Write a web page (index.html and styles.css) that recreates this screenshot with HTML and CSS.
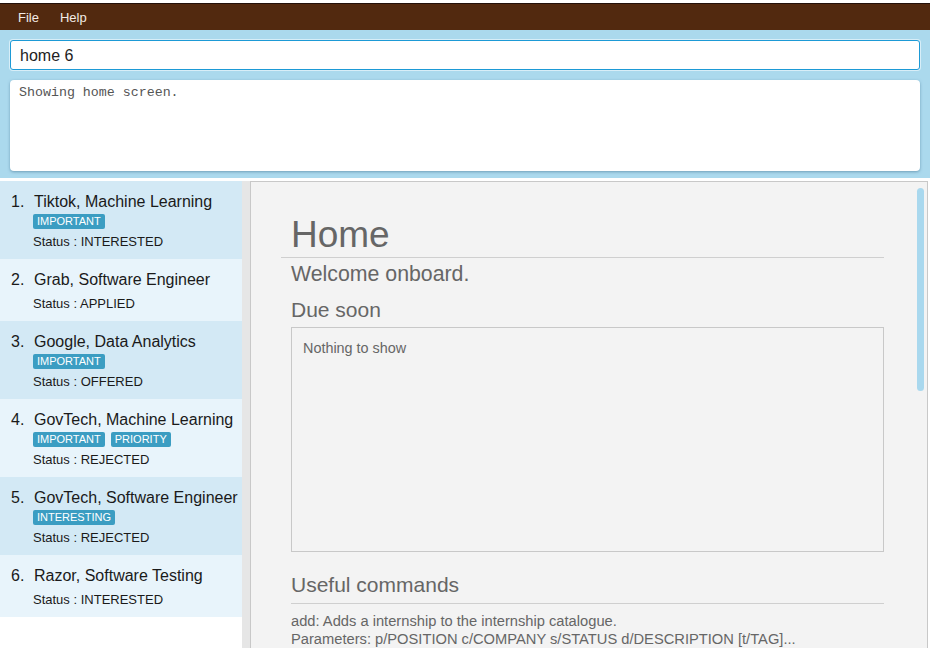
FILE: index.html
```html
<!DOCTYPE html>
<html>
<head>
<meta charset="utf-8">
<link rel="stylesheet" href="styles.css">
</head>
<body>
<div class="app">
  <div class="menubar">
    <span class="menu-item">File</span>
    <span class="menu-item">Help</span>
  </div>
  <div class="top">
    <div class="command">home 6</div>
    <div class="result">Showing home screen.</div>
  </div>
  <div class="bottom">
    <div class="list">
      <div class="cell dark tall">
        <div class="title"><span class="idx">1.</span>Tiktok, Machine Learning</div>
        <div class="tags"><span class="tag">IMPORTANT</span></div>
        <div class="status">Status : INTERESTED</div>
      </div>
      <div class="cell light">
        <div class="title"><span class="idx">2.</span>Grab, Software Engineer</div>
        <div class="status">Status : APPLIED</div>
      </div>
      <div class="cell dark tall">
        <div class="title"><span class="idx">3.</span>Google, Data Analytics</div>
        <div class="tags"><span class="tag">IMPORTANT</span></div>
        <div class="status">Status : OFFERED</div>
      </div>
      <div class="cell light tall">
        <div class="title"><span class="idx">4.</span>GovTech, Machine Learning</div>
        <div class="tags"><span class="tag">IMPORTANT</span><span class="tag">PRIORITY</span></div>
        <div class="status">Status : REJECTED</div>
      </div>
      <div class="cell dark tall">
        <div class="title"><span class="idx">5.</span>GovTech, Software Engineer</div>
        <div class="tags"><span class="tag">INTERESTING</span></div>
        <div class="status">Status : REJECTED</div>
      </div>
      <div class="cell light">
        <div class="title"><span class="idx">6.</span>Razor, Software Testing</div>
        <div class="status">Status : INTERESTED</div>
      </div>
    </div>
    <div class="gutter"></div>
    <div class="main">
      <div class="content">
        <h1 class="heading">Home</h1>
        <div class="welcome">Welcome onboard.</div>
        <div class="section due">Due soon</div>
        <div class="due-box">Nothing to show</div>
        <div class="section useful">Useful commands</div>
        <div class="cmd-text">add: Adds a internship to the internship catalogue.<br>Parameters: p/POSITION c/COMPANY s/STATUS d/DESCRIPTION [t/TAG]...</div>
      </div>
      <div class="scroll-thumb"></div>
    </div>
  </div>
</div>
</body>
</html>
```

FILE: styles.css
```css
* { box-sizing: border-box; }
html, body {
  margin: 0;
  padding: 0;
  width: 930px;
  height: 648px;
  overflow: hidden;
  background: #ffffff;
  font-family: "Liberation Sans", Arial, sans-serif;
}
.app {
  display: flex;
  flex-direction: column;
  height: 648px;
}
.menubar {
  margin-top: 3px;
  height: 27px;
  background: #52290f;
  border-top: 1px solid #24110a;
  display: flex;
  align-items: center;
  padding-left: 18px;
  gap: 21px;
}
.menu-item {
  color: #f3ebe6;
  font-size: 13px;
}
.top {
  background: #abd9ed;
  padding: 10px 10px 0 10px;
  height: 151px;
  border-bottom: 3px solid #ffffff;
}
.command {
  height: 30px;
  width: 910px;
  background: #ffffff;
  border: 1.5px solid #1d9ad6;
  border-radius: 3px;
  box-shadow: 0 0 0 1px #d8eef8;
  font-size: 16px;
  color: #222;
  padding-left: 9px;
  line-height: 29px;
}
.result {
  margin-top: 10px;
  height: 91px;
  width: 910px;
  background: #ffffff;
  border-radius: 4px;
  box-shadow: 0 1px 3px rgba(60, 110, 140, 0.55);
  font-family: "Liberation Mono", "Courier New", monospace;
  font-size: 13.3px;
  color: #555;
  padding: 5px 9px;
}
.bottom {
  flex: 1;
  display: flex;
  min-height: 0;
}
.list {
  width: 242px;
  background: #ffffff;
}
.cell {
  padding: 11px 0 0 11px;
  height: 62px;
}
.cell.tall { height: 78px; }
.cell.dark { background: #d3e9f5; }
.cell.light { background: #e8f4fb; }
.title {
  font-size: 16px;
  color: #1a1a1a;
  height: 20px;
  line-height: 20px;
  white-space: nowrap;
}
.idx {
  display: inline-block;
  width: 23px;
}
.tags {
  display: flex;
  gap: 6px;
  margin-left: 22px;
  margin-top: 2px;
  height: 15px;
}
.tag {
  background: #3b9dc2;
  color: #ffffff;
  font-size: 11px;
  line-height: 15px;
  height: 15px;
  padding: 0 4px;
  border-radius: 2px;
}
.status {
  margin-left: 22px;
  margin-top: 5px;
  font-size: 13px;
  color: #1a1a1a;
  line-height: 16px;
}
.cell:not(.tall) .status { margin-top: 6px; }
.gutter {
  width: 9px;
  background: #e6e6e6;
  border-right: 1px solid #c8c8c8;
}
.main {
  width: 677px;
  background: #f3f3f3;
  border-top: 1px solid #c8c8c8;
  border-right: 1px solid #c8c8c8;
  position: relative;
  overflow: hidden;
}
.content {
  padding: 31px 0 0 30px;
  width: 633px;
}
.heading {
  margin: 0;
  font-weight: normal;
  font-size: 37px;
  line-height: 44px;
  color: #666;
  padding-left: 10px;
  border-bottom: 1px solid #cfcfcf;
  height: 45px;
}
.welcome, .section {
  font-size: 21px;
  color: #666;
  padding-left: 10px;
  line-height: 24px;
}
.welcome { margin-top: 4px; font-size: 21.3px; }
.section.due { margin-top: 12px; }
.due-box {
  margin: 5px 0 0 10px;
  height: 225px;
  border: 1px solid #c8c8c8;
  font-size: 14.4px;
  color: #666;
  padding: 12px 11px;
}
.section.useful {
  margin-top: 21px;
  border-bottom: 1px solid #cfcfcf;
  padding-bottom: 6px;
  margin-left: 10px;
  padding-left: 0;
}
.cmd-text {
  margin: 8px 0 0 10px;
  font-size: 14.7px;
  color: #666;
  line-height: 18px;
  white-space: nowrap;
}
.scroll-thumb {
  position: absolute;
  top: 6px;
  right: 3px;
  width: 7px;
  height: 203px;
  background: #a9d8ee;
  border-radius: 4px;
}
```
